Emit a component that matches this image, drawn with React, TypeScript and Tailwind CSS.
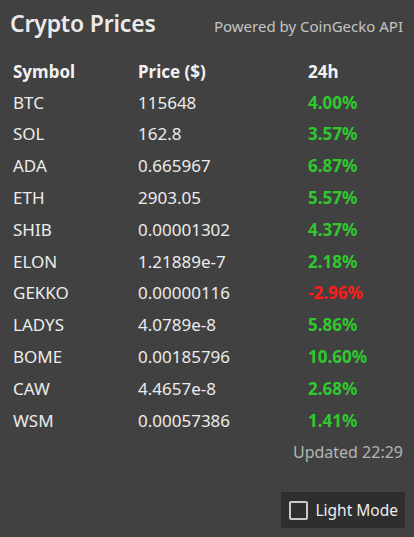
import { useState } from "react";

type Coin = { symbol: string; price: string; change: number };

const coins: Coin[] = [
  { symbol: "BTC", price: "115648", change: 4.0 },
  { symbol: "SOL", price: "162.8", change: 3.57 },
  { symbol: "ADA", price: "0.665967", change: 6.87 },
  { symbol: "ETH", price: "2903.05", change: 5.57 },
  { symbol: "SHIB", price: "0.00001302", change: 4.37 },
  { symbol: "ELON", price: "1.21889e-7", change: 2.18 },
  { symbol: "GEKKO", price: "0.00000116", change: -2.96 },
  { symbol: "LADYS", price: "4.0789e-8", change: 5.86 },
  { symbol: "BOME", price: "0.00185796", change: 10.6 },
  { symbol: "CAW", price: "4.4657e-8", change: 2.68 },
  { symbol: "WSM", price: "0.00057386", change: 1.41 },
];

const App = () => {
  const [light, setLight] = useState(false);

  return (
    <div className="min-h-screen w-full bg-[#414141] text-[#ececec] font-['Noto_Sans',sans-serif]">
      {/* Header */}
      <div className="flex items-baseline justify-between pl-[10px] pr-[11px] pt-[6px]">
        <h1 className="text-[23px] font-semibold tracking-[-0.2px] text-[#eaeaea]">Crypto Prices</h1>
        <span className="text-[15px] text-[#c4c4c4]">Powered by CoinGecko API</span>
      </div>

      {/* Table */}
      <div className="mt-[17px] pl-[13px] text-[17px]">
        <div className="grid h-[29px] grid-cols-[125px_170px_1fr] items-center font-bold text-[#f2f2f2]">
          <span>Symbol</span>
          <span>Price ($)</span>
          <span>24h</span>
        </div>
        {coins.map((c) => (
          <div key={c.symbol} className="grid h-[31.8px] grid-cols-[125px_170px_1fr] items-center">
            <span>{c.symbol}</span>
            <span>{c.price}</span>
            <span className={c.change < 0 ? "font-bold text-[#ff1a1a]" : "font-bold text-[#2fc92f]"}>
              {c.change.toFixed(2)}%
            </span>
          </div>
        ))}
      </div>

      <div className="mt-[4px] pr-[11px] text-right text-[16px] text-[#b4b4b4]">Updated 22:29</div>

      {/* Theme toggle */}
      <div className="mt-[28px] flex justify-end pr-[9px]">
        <label className="flex h-[36px] cursor-pointer items-center gap-[7px] bg-[#2e2e2e] pl-[8px] pr-[7px] text-[15.5px] text-[#ececec]">
          <input
            type="checkbox"
            checked={light}
            onChange={() => setLight(!light)}
            className="h-[19px] w-[19px] appearance-none rounded-[2px] border-2 border-[#c8c8c8] bg-transparent"
          />
          Light Mode
        </label>
      </div>
    </div>
  );
};

export default App;
